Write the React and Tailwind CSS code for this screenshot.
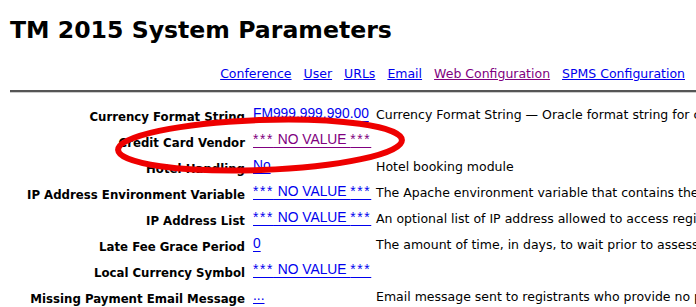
import React from "react";

const navLinks = [
  { label: "Conference" },
  { label: "User" },
  { label: "URLs" },
  { label: "Email" },
  { label: "Web Configuration", visited: true },
  { label: "SPMS Configuration" },
];

const params = [
  {
    name: "Currency Format String",
    value: "FM999,999,990.00",
    desc: "Currency Format String \u2014 Oracle format string for currency amounts",
  },
  { name: "Credit Card Vendor", value: "*** NO VALUE ***", visited: true, desc: "" },
  { name: "Hotel Handling", value: "No", desc: "Hotel booking module" },
  {
    name: "IP Address Environment Variable",
    value: "*** NO VALUE ***",
    desc: "The Apache environment variable that contains the client IP address",
  },
  {
    name: "IP Address List",
    value: "*** NO VALUE ***",
    desc: "An optional list of IP address allowed to access registration",
  },
  {
    name: "Late Fee Grace Period",
    value: "0",
    desc: "The amount of time, in days, to wait prior to assessing a late fee",
  },
  { name: "Local Currency Symbol", value: "*** NO VALUE ***", desc: "" },
  {
    name: "Missing Payment Email Message",
    value: "...",
    desc: "Email message sent to registrants who provide no payment",
  },
];

const ValueText = ({ text }) => {
  // the asterisks in the original font are much wider than Arial's
  const parts = text.split(/(\*\*\*)/);
  return parts.map((p, i) =>
    p === "***" ? (
      <span key={i} className="tracking-[1.6px]">
        {p}
      </span>
    ) : (
      <span key={i}>{p}</span>
    )
  );
};

export default function App() {
  return (
    <div className="relative w-[696px] h-[307px] overflow-hidden bg-white font-['DejaVu_Sans',sans-serif] text-black">
      <h1 className="pl-[10px] pt-[15px] text-[23.6px] leading-[30px] font-bold">TM 2015 System Parameters</h1>

      <div className="flex justify-end gap-[12px] pr-[11px] mt-[21px] text-[12.5px] leading-[16px]">
        {navLinks.map((l) => (
          <a
            key={l.label}
            href="#"
            className={`underline ${l.visited ? "text-[#800080]" : "text-[#0000ee]"}`}
          >
            {l.label}
          </a>
        ))}
      </div>

      <div className="ml-[10px] mt-[8px] border-t-2 border-t-[#555] border-b border-b-[#ccc]" />

      <div className="mt-[11px] flex flex-col">
        {params.map((p) => (
          <div key={p.name} className="flex h-[26px] items-start whitespace-nowrap">
            <div className="w-[246px] shrink-0 pr-[1px] pt-[5px] text-right text-[11.75px] font-bold leading-[16px]">
              {p.name}
            </div>
            <div className="w-[130px] shrink-0 pl-[7px] pt-[2px] font-['Liberation_Sans',Arial,sans-serif] text-[13.8px] leading-[16px]">
              <a
                href="#"
                className={`underline underline-offset-[3px] ${p.visited ? "text-[#800080]" : "text-[#0000ee]"}`}
              >
                <ValueText text={p.value} />
              </a>
            </div>
            <div className="pt-[3px] text-[12.5px] leading-[16px]">{p.desc}</div>
          </div>
        ))}
      </div>

      <svg
        className="pointer-events-none absolute left-0 top-0"
        width="696"
        height="307"
        viewBox="0 0 696 307"
      >
        <ellipse
          cx="260"
          cy="145"
          rx="142"
          ry="25"
          transform="rotate(-2 260 145)"
          fill="none"
          stroke="#ee0000"
          strokeWidth="6"
        />
      </svg>
    </div>
  );
}
